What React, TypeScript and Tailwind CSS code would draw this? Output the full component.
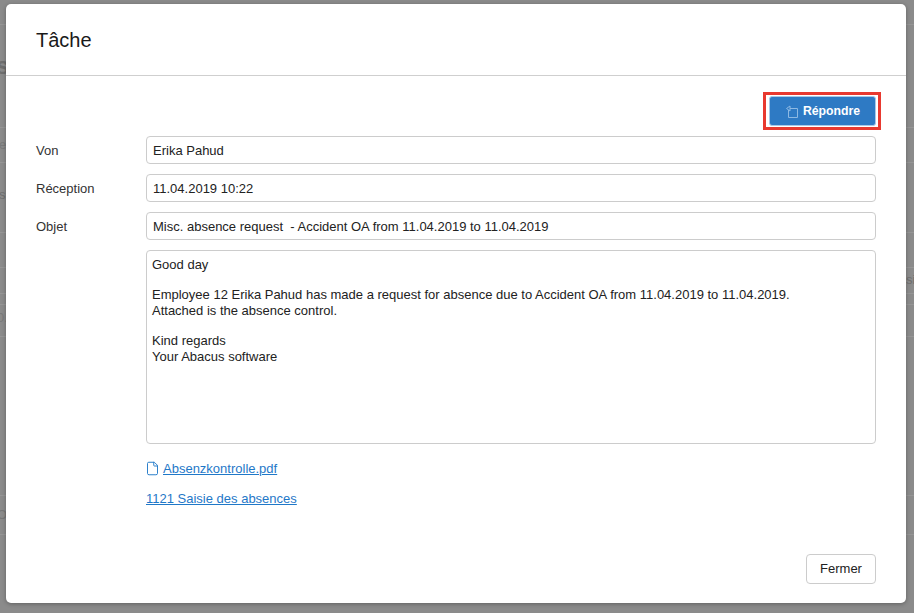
import { File } from 'lucide-react';

const fields = [
  { label: 'Von', value: 'Erika Pahud' },
  { label: 'Réception', value: '11.04.2019 10:22' },
  { label: 'Objet', value: 'Misc. absence request  - Accident OA from 11.04.2019 to 11.04.2019' },
];

// rows of the page dimmed behind the dialog
const backdropLines = [24, 127, 162, 232, 267, 293, 304, 336, 495, 534];

function ReplyIcon() {
  return (
    <svg width="13" height="13" viewBox="0 0 13 13" fill="none" stroke="#8db9e3" strokeWidth="1" className="mr-[5px]">
      <path d="M3.5 5V12.5H12.5V3.5H5" />
      <path d="M5 1L1.5 3.5L5 6Z" />
    </svg>
  );
}

export default function App() {
  return (
    <div className="relative h-[613px] w-[914px] overflow-hidden bg-[#8b8b8b] pl-[6px] pt-[4px] font-['Liberation_Sans',Arial,sans-serif] text-[13px] text-[#333333]">
      {backdropLines.map((y) => (
        <div key={y} className="absolute left-0 h-px w-full bg-[#969696]" style={{ top: y }} />
      ))}
      <span className="absolute left-[-4px] top-[54px] text-[24px] font-bold leading-none text-[#6f6f6f]">s</span>
      <span className="absolute left-[-1px] top-[138px] text-[13px] leading-none text-[#7a7a7a]">e</span>
      <span className="absolute left-[-1px] top-[188px] text-[13px] leading-none text-[#6f6f6f]">s</span>
      <span className="absolute left-[-3px] top-[311px] text-[13px] leading-none text-[#7a7a7a]">0.</span>
      <span className="absolute left-[-3px] top-[508px] text-[13px] leading-none text-[#777777]">OI</span>
      <span className="absolute left-[906px] top-[273px] text-[13px] leading-none text-[#6f6f6f]">si</span>

      <div className="relative flex h-[599px] w-[900px] flex-col rounded-[5px] bg-white shadow-[0_1px_4px_rgba(0,0,0,0.3)]">
        <div className="flex h-[72px] shrink-0 items-center border-b border-[#cfcfcf] pl-[30px]">
          <h1 className="text-[20px] font-normal leading-none text-[#1a1a1a]">Tâche</h1>
        </div>

        <div className="flex flex-1 flex-col px-[30px]">
          <div className="mt-[16px] flex justify-end">
            <div className="-mr-[5px] border-[3px] border-[#e8392f] py-px pl-[3px] pr-[2px]">
              <button className="flex h-[30px] w-[107px] items-center justify-center rounded-[3px] border border-[#a9c8e6] bg-[#2e7ac4] text-[12.25px] font-bold text-white">
                <ReplyIcon />
                Répondre
              </button>
            </div>
          </div>

          <div className="mt-[6px] flex flex-col gap-[10px]">
            {fields.map((f) => (
              <div key={f.label} className="flex items-center">
                <label className="w-[110px] shrink-0 pt-[2px]">{f.label}</label>
                <div className="flex h-[28px] flex-1 items-center whitespace-pre rounded-[4px] border border-[#cccccc] px-[6px] pt-[2px] text-[#222222]">
                  {f.value}
                </div>
              </div>
            ))}
          </div>

          <div className="ml-[110px] mt-[10px] h-[194px] rounded-[4px] border border-[#cccccc] px-[5px] pt-[6px] leading-[15px] text-[#222222]">
            <p>Good day</p>
            <p className="mt-[15px]">Employee 12 Erika Pahud has made a request for absence due to Accident OA from 11.04.2019 to 11.04.2019.</p>
            <p className="mt-px">Attached is the absence control.</p>
            <p className="mt-[15px]">Kind regards</p>
            <p className="mt-px">Your Abacus software</p>
          </div>

          <div className="ml-[110px] mt-[15px] flex items-center text-[#1f78c8]">
            <File size={15} strokeWidth={1.5} className="-ml-[1px] mr-[3px]" />
            <a className="underline">Absenzkontrolle.pdf</a>
          </div>
          <a className="ml-[110px] mt-[10px] text-[#1f78c8] underline">1121 Saisie des absences</a>

          <div className="mb-[19px] mt-auto flex justify-end">
            <button className="h-[30px] w-[70px] rounded-[4px] border border-[#cccccc] bg-white text-[13px] text-[#222222]">
              Fermer
            </button>
          </div>
        </div>
      </div>
    </div>
  );
}
